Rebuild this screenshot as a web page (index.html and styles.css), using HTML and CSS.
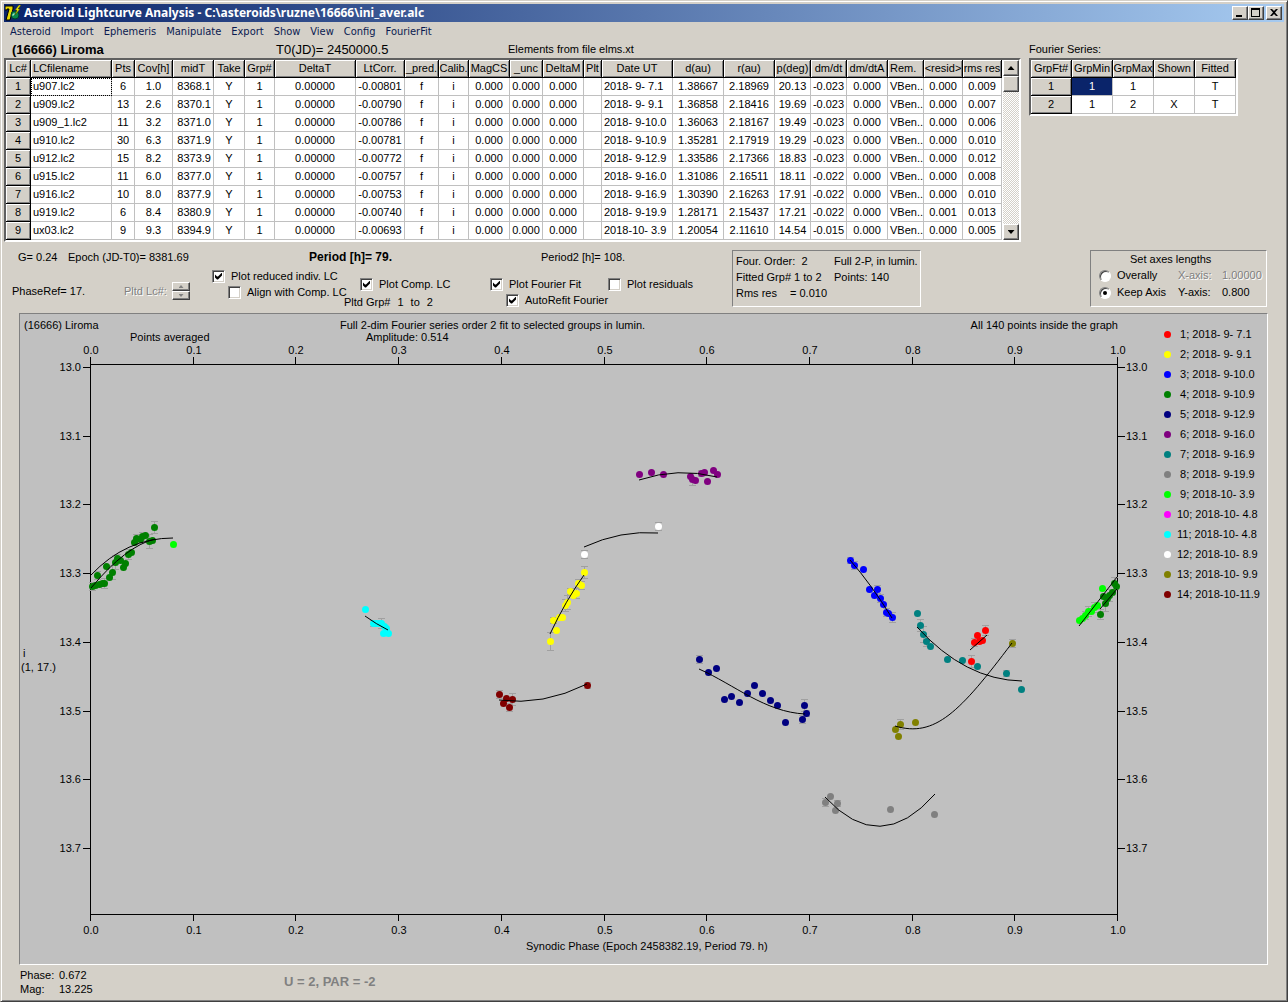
FILE: index.html
```html
<!DOCTYPE html>
<html lang="en">
<head>
    <meta charset="UTF-8">
    <meta name="viewport" content="width=device-width, initial-scale=1.0">
    <title>Asteroid Lightcurve Analysis</title>
    <link rel="stylesheet" href="styles.css">
</head>
<body>
    <div class="window">
        <header class="titlebar">
            <svg class="app-icon" viewBox="0 0 16 16" aria-hidden="true">
                <path d="M0 1h8v3L5 15H1L4 4H2v1H0z" fill="#e8d800" stroke="#000"/>
                <circle cx="10" cy="10" r="4" fill="#0a8a4a" stroke="#003c30"/>
                <path d="M7 10l2-2 1 1-2 2z" fill="#9fe8c8"/>
                <path d="M14 0l-4 5h2l-2 5 5-6h-2l3-4z" fill="#f4f000" stroke="#404000" stroke-width=".5"/>
            </svg>
            <h1>Asteroid Lightcurve Analysis - C:\asteroids\ruzne\16666\ini_aver.alc</h1>
            <div class="window-buttons">
                <button type="button" aria-label="Minimize">
                    <svg viewBox="0 0 12 10"><path d="M2 7h6v2H2z"/></svg>
                </button>
                <button type="button" aria-label="Maximize">
                    <svg viewBox="0 0 12 10"><path fill-rule="evenodd" d="M1 0h9v9H1zM2 2v6h7V2z"/></svg>
                </button>
                <button type="button" class="close" aria-label="Close">
                    <svg viewBox="0 0 12 10"><path d="M2 1h2l2 2 2-2h2L7 4.500l3 3.500H8L6 6 4 8H2l3-3.500z"/></svg>
                </button>
            </div>
        </header>

        <nav class="menu">
            <a href="#">Asteroid</a>
            <a href="#">Import</a>
            <a href="#">Ephemeris</a>
            <a href="#">Manipulate</a>
            <a href="#">Export</a>
            <a href="#">Show</a>
            <a href="#">View</a>
            <a href="#">Config</a>
            <a href="#">FourierFit</a>
        </nav>

        <main>
            <div class="grids">
                <section>
                    <div class="object-info">
                        <h2>(16666) Liroma</h2>
                        <span class="epoch">T0(JD)= 2450000.5</span>
                        <span>Elements from file elms.xt</span>
                    </div>
                    <div class="grid-box">
                        <table class="grid" id="lcTable">
                            <colgroup></colgroup>
                            <thead><tr></tr></thead>
                            <tbody></tbody>
                        </table>
                        <div class="scrollbar">
                            <button type="button" aria-label="Scroll up"><i class="arrow up"></i></button>
                            <div class="thumb"></div>
                            <button type="button" class="scroll-down" aria-label="Scroll down"><i class="arrow down"></i></button>
                        </div>
                    </div>
                </section>

                <section>
                    <div class="object-info fourier-title">Fourier Series:</div>
                    <div class="grid-box">
                        <table class="grid fourier">
                            <thead>
                                <tr><th>GrpFt#</th><th>GrpMin</th><th>GrpMax</th><th>Shown</th><th>Fitted</th></tr>
                            </thead>
                            <tbody>
                                <tr><th>1</th><td class="selected">1</td><td>1</td><td></td><td>T</td></tr>
                                <tr><th>2</th><td>1</td><td>2</td><td>X</td><td>T</td></tr>
                            </tbody>
                        </table>
                    </div>
                </section>
            </div>

            <div class="controls">
                <div class="setup">
                    <div class="setup-top">
                        <span>G= 0.24</span>
                        <span>Epoch (JD-T0)= 8381.69</span>
                        <strong>Period [h]= 79.</strong>
                        <span>Period2 [h]= 108.</span>
                    </div>
                    <div class="setup-bottom">
                        <div class="phase-ref">
                            <span>PhaseRef= 17.</span>
                            <span class="disabled">Pltd Lc#:</span>
                            <span class="spinner">
                                <button type="button" disabled aria-label="Next lightcurve"><i class="arrow up"></i></button>
                                <button type="button" disabled aria-label="Previous lightcurve"><i class="arrow down"></i></button>
                            </span>
                        </div>
                        <div class="checks plot-lc">
                            <label><input type="checkbox" checked>Plot reduced indiv. LC</label>
                            <label class="sub"><input type="checkbox">Align with Comp. LC</label>
                        </div>
                        <div class="checks comp-lc">
                            <label class="sub"><input type="checkbox" checked>Plot Comp. LC</label>
                            <div class="plotted-group"><span>Pltd Grp#</span><span>1</span><span>to</span><span>2</span></div>
                        </div>
                        <div class="checks fit">
                            <label><input type="checkbox" checked>Plot Fourier Fit</label>
                            <label class="sub"><input type="checkbox" checked>AutoRefit Fourier</label>
                        </div>
                        <div class="checks residuals">
                            <label><input type="checkbox">Plot residuals</label>
                        </div>
                    </div>
                </div>

                <div class="panel fit-info">
                    <span>Four. Order:&nbsp; 2</span><span>Full 2-P, in lumin.</span>
                    <span>Fitted Grp# 1 to 2</span><span>Points: 140</span>
                    <span class="rms"><span>Rms res</span><span>= 0.010</span></span>
                </div>

                <div class="panel axes">
                    <div class="axes-title">Set axes lengths</div>
                    <label><input type="radio" name="axes">Overally</label>
                    <span class="disabled">X-axis:</span><span class="disabled">1.00000</span>
                    <label><input type="radio" name="axes" checked>Keep Axis</label>
                    <span>Y-axis:</span><span>0.800</span>
                </div>
            </div>

            <div class="chart">
                <svg id="plot" viewBox="20 314 1130 650" role="img" aria-label="Lightcurve plot">
                    <text x="24" y="329">(16666) Liroma</text>
                    <text x="340" y="329">Full 2-dim Fourier series order 2 fit to selected groups in lumin.</text>
                    <text x="1118" y="329" text-anchor="end">All 140 points inside the graph</text>
                    <text x="130" y="341">Points averaged</text>
                    <text x="366" y="341">Amplitude: 0.514</text>
                    <text x="23" y="657">i</text>
                    <text x="21" y="671">(1, 17.)</text>
                    <text x="526" y="950">Synodic Phase (Epoch 2458382.19, Period 79. h)</text>
                    <g id="axes"></g>
                    <g id="bars"></g>
                    <g id="points"></g>
                    <g id="curves"></g>
                </svg>
                <ul class="legend" id="legend"></ul>
            </div>
        </main>

        <footer class="status">
            <dl>
                <dt>Phase:</dt><dd>0.672</dd>
                <dt>Mag:</dt><dd>13.225</dd>
            </dl>
            <strong>U = 2, PAR = -2</strong>
        </footer>
    </div>

    <script src="script.js"></script>
</body>
</html>
```

FILE: styles.css
```css
* {
    box-sizing: border-box;
}
body {
    margin: 0;
    background-color: #d4d0c8;
    color: #000;
    font: 11px/14px "Liberation Sans", Arial, sans-serif;
}
h1, h2, dl, dd, ul {
    margin: 0;
    padding: 0;
}
button {
    display: flex;
    align-items: center;
    justify-content: center;
    padding: 0;
    border: 1px solid;
    border-color: #fff #404040 #404040 #fff;
    background-color: #d4d0c8;
    box-shadow: inset -1px -1px #808080;
}

/* Window frame */
.window {
    display: flex;
    flex-direction: column;
    min-height: 100vh;
    padding: 3px 3px 1px 2px;
    border: 1px solid;
    border-color: #d4d0c8 #404040 #404040 #d4d0c8;
    box-shadow: inset 1px 1px #fff, inset -1px -1px #808080;
}
.titlebar {
    display: flex;
    align-items: center;
    height: 18px;
    margin-left: 1px;
    padding: 0 2px 0 1px;
    background: linear-gradient(to right, #0a246a, #a6caf0);
    color: #fff;
}
.app-icon {
    width: 16px;
    height: 16px;
    margin-right: 3px;
}
h1 {
    font: bold 12px/18px "Noto Sans", "DejaVu Sans", sans-serif;
}
.window-buttons {
    display: flex;
    margin-left: auto;
}
.window-buttons button {
    width: 16px;
    height: 14px;
}
.window-buttons .close {
    margin-left: 2px;
}
.window-buttons svg {
    width: 12px;
    height: 10px;
}
.menu {
    display: flex;
    gap: 10px;
    height: 20px;
    padding-left: 7px;
    font: 11px/20px "DejaVu Sans Condensed", "DejaVu Sans", sans-serif;
}
.menu a {
    color: #0a1a50;
    text-decoration: none;
}

/* Data grids */
.grids {
    display: flex;
    align-items: flex-start;
    gap: 8px;
    padding-left: 1px;
}
.object-info {
    display: grid;
    grid-template-columns: 264px 232px 1fr;
    height: 16px;
    padding-left: 8px;
}
.object-info h2, .object-info .epoch {
    font-size: 13px;
    line-height: 16px;
}
.fourier-title {
    display: block;
    padding-left: 0;
}
.grid-box {
    display: flex;
    width: max-content;
    border: 2px solid;
    border-color: #606060 #fff #fff #606060;
    background-color: #fff;
}
.grid {
    table-layout: fixed;
    width: 996px;
    border-collapse: separate;
    border-spacing: 0;
}
.grid.fourier {
    width: 205px;
}
.grid th, .grid td {
    height: 18px;
    padding: 0;
    overflow: hidden;
    border: 0 solid #c0c0c0;
    border-width: 0 1px 1px 0;
    line-height: 17px;
    text-align: center;
    white-space: pre;
}
.grid th {
    border-color: #000;
    background-color: #d4d0c8;
    box-shadow: inset 1px 1px #fff, inset -1px -1px #808080;
    font-weight: normal;
}
.grid .left {
    padding-left: 2px;
    text-align: left;
}
.grid .right {
    padding-right: 2px;
    text-align: right;
}
.grid .focused {
    outline: 1px dotted #000;
    outline-offset: -1px;
}
.grid .selected {
    background-color: #0a246a;
    color: #fff;
}
.scrollbar {
    display: flex;
    flex-direction: column;
    width: 16px;
    margin-left: 1px;
    background: repeating-conic-gradient(#fff 0 25%, #d4d0c8 0 50%) 0 0 / 2px 2px;
}
.scrollbar button, .thumb {
    height: 16px;
}
.scroll-down {
    margin-top: auto;
}
.thumb {
    border: 1px solid;
    border-color: #fff #404040 #404040 #fff;
    background-color: #d4d0c8;
    box-shadow: inset -1px -1px #808080;
}
.arrow {
    width: 7px;
    height: 4px;
    background-color: #000;
}
.arrow.up {
    clip-path: polygon(50% 0, 100% 100%, 0 100%);
}
.arrow.down {
    clip-path: polygon(0 0, 100% 0, 50% 100%);
}

/* Controls */
.controls {
    display: flex;
    align-items: flex-start;
    padding: 8px 17px 4px 9px;
}
.setup {
    flex: none;
    width: 720px;
}
.setup-top {
    display: grid;
    grid-template-columns: 50px 241px 232px 1fr;
    padding-left: 6px;
}
.setup-top strong {
    font-size: 12px;
}
.setup-bottom {
    display: flex;
    align-items: flex-start;
}
.phase-ref {
    display: grid;
    grid-template-columns: 112px 48px 18px;
    align-items: center;
    width: 200px;
    padding-top: 18px;
}
.disabled {
    color: #808080;
    text-shadow: 1px 1px #fff;
}
.spinner button {
    width: 18px;
    height: 9px;
}
.spinner .arrow {
    width: 5px;
    height: 3px;
    background-color: #808080;
}
.checks label {
    display: flex;
    align-items: center;
    gap: 6px;
    height: 16px;
    white-space: nowrap;
}
.checks .sub {
    padding-left: 16px;
}
.plot-lc {
    width: 132px;
    padding-top: 4px;
}
.comp-lc {
    width: 146px;
    padding-top: 12px;
}
.fit {
    width: 118px;
    padding-top: 12px;
}
.residuals {
    padding-top: 12px;
}
.plotted-group {
    display: flex;
    gap: 7px;
    padding-top: 3px;
}
input {
    flex: none;
    margin: 0;
    appearance: none;
    background-color: #fff;
}
input[type="checkbox"] {
    width: 13px;
    height: 13px;
    padding: 2px;
    border: 1px solid;
    border-color: #808080 #fff #fff #808080;
    box-shadow: inset 1px 1px #404040, inset -1px -1px #d4d0c8;
}
input[type="checkbox"]:checked::before {
    content: "";
    display: block;
    width: 7px;
    height: 7px;
    background-color: #000;
    clip-path: polygon(0 2px, 2px 4px, 3px 4px, 7px 0, 7px 3px, 3px 7px, 2px 7px, 0 5px);
}
input[type="radio"] {
    width: 12px;
    height: 12px;
    padding: 3px;
    border: 1px solid;
    border-color: #808080 #fff #fff #808080;
    border-radius: 50%;
    box-shadow: inset 1px 1px #404040;
}
input[type="radio"]:checked::before {
    content: "";
    display: block;
    width: 4px;
    height: 4px;
    border-radius: 50%;
    background-color: #000;
}
.panel {
    height: 57px;
    border: 1px solid;
    border-color: #808080 #fff #fff #808080;
}
.fit-info {
    display: grid;
    grid-template-columns: 98px 1fr;
    align-content: start;
    width: 189px;
    padding: 2px 3px;
    line-height: 16px;
    white-space: nowrap;
}
.rms {
    display: grid;
    grid-template-columns: 54px 1fr;
}
.axes {
    display: grid;
    grid-template-columns: 79px 44px 1fr;
    align-content: start;
    width: 177px;
    margin-left: auto;
    padding-left: 8px;
    line-height: 17px;
}
.axes-title {
    grid-column: 1 / -1;
    padding-left: 31px;
    line-height: 16px;
}
.axes label {
    display: flex;
    align-items: center;
    gap: 6px;
}

/* Chart */
.chart {
    display: flex;
    align-items: flex-start;
    margin: 0 16px;
    border: 1px solid;
    border-color: #808080 #fff #fff #808080;
    background-color: #c0c0c0;
}
.chart svg {
    flex: 1;
    min-width: 0;
    font-size: 11px;
}
#axes path, #bars {
    shape-rendering: crispEdges;
}
#axes path, #curves path {
    fill: none;
    stroke: #000;
}
#bars path {
    stroke: #a0a0a0;
}
.legend {
    width: 117px;
    padding: 10px 0 0 14px;
    list-style: none;
}
.legend li {
    display: flex;
    align-items: center;
    gap: 6px;
    height: 20px;
    white-space: pre;
}
.legend i {
    width: 7px;
    height: 7px;
    border-radius: 50%;
}

.status {
    display: flex;
    align-items: center;
    padding: 3px 17px;
}
.status dl {
    display: grid;
    grid-template-columns: 39px 225px;
}
.status strong {
    color: #808080;
    font-size: 13px;
}
```

FILE: script.js
```js
// Lightcurve table: title, column width, cell alignment
const columns = [
    ['Lc#', 25], ['LCfilename', 81, 'left'], ['Pts', 23], ['Cov[h]', 38], ['midT', 41, 'right'],
    ['Take', 31], ['Grp#', 30], ['DeltaT', 81], ['LtCorr.', 49], ['_pred.', 34], ['Calib.', 30],
    ['MagCS', 41], ['_unc', 33], ['DeltaM', 41], ['Plt', 18], ['Date UT', 71, 'left'],
    ['d(au)', 51], ['r(au)', 51], ['p(deg)', 36], ['dm/dt', 36], ['dm/dtA', 41],
    ['Rem.', 36, 'left'], ['<resid>', 39], ['rms res', 39]
];

// file, points, coverage, midT, light time, date, delta, r, phase angle, dm/dt, resid, rms
const curvesData = [
    ['u907.lc2', '6', '1.0', '8368.1', '-0.00801', '2018- 9- 7.1', '1.38667', '2.18969', '20.13', '-0.023', '0.000', '0.009'],
    ['u909.lc2', '13', '2.6', '8370.1', '-0.00790', '2018- 9- 9.1', '1.36858', '2.18416', '19.69', '-0.023', '0.000', '0.007'],
    ['u909_1.lc2', '11', '3.2', '8371.0', '-0.00786', '2018- 9-10.0', '1.36063', '2.18167', '19.49', '-0.023', '0.000', '0.006'],
    ['u910.lc2', '30', '6.3', '8371.9', '-0.00781', '2018- 9-10.9', '1.35281', '2.17919', '19.29', '-0.023', '0.000', '0.010'],
    ['u912.lc2', '15', '8.2', '8373.9', '-0.00772', '2018- 9-12.9', '1.33586', '2.17366', '18.83', '-0.023', '0.000', '0.012'],
    ['u915.lc2', '11', '6.0', '8377.0', '-0.00757', '2018- 9-16.0', '1.31086', '2.16511', '18.11', '-0.022', '0.000', '0.008'],
    ['u916.lc2', '10', '8.0', '8377.9', '-0.00753', '2018- 9-16.9', '1.30390', '2.16263', '17.91', '-0.022', '0.000', '0.010'],
    ['u919.lc2', '6', '8.4', '8380.9', '-0.00740', '2018- 9-19.9', '1.28171', '2.15437', '17.21', '-0.022', '0.001', '0.013'],
    ['ux03.lc2', '9', '9.3', '8394.9', '-0.00693', '2018-10- 3.9', '1.20054', '2.11610', '14.54', '-0.015', '0.000', '0.005']
];

// Plotted series; each point is x, y and, where drawn, half height of its error bar
const series = [
    { date: '2018- 9- 7.1', color: '#ff0000', points: [[985,630,5],[977,635],[974,642,4],[979,641],[982,640],[971,661,6]], curves: ['M970 650L987 635'] },
    { date: '2018- 9- 9.1', color: '#ffff00', points: [[584,572,6],[578,583,4],[581,585,4],[570,591,3],[573,595],[576,593,5],[567,602,7],[565,605,6],[559,617],[553,620,3],[562,617],[556,630],[550,641,9]], curves: ['M550 634Q566 600 584 575'] },
    { date: '2018- 9-10.0', color: '#0000ff', points: [[850,560,3],[854,565,4],[863,569],[869,589],[877,589,4],[874,595],[880,598,4],[883,604],[886,612,4],[888,613],[892,617,5]], curves: ['M850 560Q871 584 892 618'] },
    { date: '2018- 9-10.9', color: '#008000', points: [[92,586,4],[95,585],[97,575,4],[99,584],[102,583],[104,583,5],[106,566],[109,577],[112,572,7],[115,562,7],[117,558,4],[120,560],[123,567],[125,563],[128,554,5],[131,552],[134,542],[136,538,4],[140,539],[142,536,4],[145,535],[149,541,7],[152,540],[154,527,6],[1100,614,5],[1105,603,8],[1103,596],[1107,598],[1109,595,6],[1112,592],[1114,583,6],[1116,586]], curves: ['M91 588Q126 546 155 539', 'M1100 609L1117 589'] },
    { date: '2018- 9-12.9', color: '#000080', points: [[699,659,4],[708,672],[716,668],[724,699],[731,696],[739,702],[747,693],[754,685],[762,693],[770,700],[777,705],[785,722],[804,705,6],[806,713,3],[802,719,4]], curves: ['M699 669C735 685 765 712 805 714'] },
    { date: '2018- 9-16.0', color: '#800080', points: [[639,474],[651,472],[663,474],[690,476],[692,479,6],[695,480],[701,473,3],[704,472],[713,470],[717,474],[707,481]], curves: ['M639 480Q678 467 717 477'] },
    { date: '2018- 9-16.9', color: '#008080', points: [[917,613],[920,625,6],[923,634,8],[926,641,5],[930,646],[947,659],[962,660],[977,666],[1006,673,3],[1021,689]], curves: ['M917 627Q965 680 1022 681'] },
    { date: '2018- 9-19.9', color: '#808080', points: [[825,802,4],[830,796],[837,803,3],[835,810],[890,809],[934,814]], curves: ['M825 797Q880 857 935 794'] },
    { date: '2018-10- 3.9', color: '#00ff00', points: [[173,544],[1102,588],[1079,620],[1082,618],[1085,615,4],[1088,611,5],[1091,611],[1094,607,5],[1097,605]], curves: ['M91 575Q126 538 173 538', 'M1079 626L1117 577'] },
    { date: '2018-10- 4.8', color: '#ff00ff', points: [], curves: [] },
    { date: '2018-10- 4.8', color: '#00ffff', points: [[365,609],[373,623,3],[376,623],[379,623],[381,623,5],[384,626],[386,628],[383,633],[388,633]], curves: ['M365 616Q376 624 388 630'] },
    { date: '2018-10- 8.9', color: '#ffffff', points: [[658,526,4],[584,554,4]], curves: ['M584 547Q621 530 658 533'] },
    { date: '2018-10- 9.9', color: '#808000', points: [[1012,643,4],[915,722],[900,724,5],[895,729],[898,736]], curves: ['M895 726C935 738 960 712 1012 643'] },
    { date: '2018-10-11.9', color: '#800000', points: [[499,694,4],[506,698],[512,699,6],[503,703],[509,707,4],[587,685,3]], curves: ['M499 700Q543 706 587 684'] }
];

function fillTable() {
    const table = document.getElementById('lcTable');
    table.querySelector('colgroup').innerHTML = columns.map(c => `<col style="width: ${c[1]}px">`).join('');
    table.querySelector('thead tr').innerHTML = columns.map(c => {
        const left = c[0] === 'LCfilename' || c[0] === 'Rem.' ? ' class="left"' : '';
        return `<th${left}>${c[0].replace('<', '&lt;')}</th>`;
    }).join('');
    table.querySelector('tbody').innerHTML = curvesData.map((d, row) => {
        const cells = [d[0], d[1], d[2], d[3], 'Y', '1', '0.00000', d[4], 'f', 'i', '0.000', '0.000', '0.000', '',
            d[5], d[6], d[7], d[8], d[9], '0.000', 'VBen..', d[10], d[11]];
        return `<tr><th>${row + 1}</th>` + cells.map((text, i) => {
            const focused = row === 0 && i === 0 ? ' focused' : '';
            return `<td class="${columns[i + 1][2] || ''}${focused}">${text}</td>`;
        }).join('') + '</tr>';
    }).join('');
}

function drawAxes() {
    let html = '<path d="M90.5 357V921M1117.5 357V921M90 364.5H1118M90 914.5H1118"/>';
    for (let i = 0; i <= 10; i++) {
        const x = Math.round(90 + i * 102.7);
        const label = (i / 10).toFixed(1);
        html += `<path d="M${x + 0.5} 357V364M${x + 0.5} 915V921"/>`;
        html += `<text x="${x + 1}" y="354" text-anchor="middle">${label}</text>`;
        html += `<text x="${x + 1}" y="934" text-anchor="middle">${label}</text>`;
    }
    for (let i = 0; i <= 7; i++) {
        const y = Math.round(367 + i * 68.7);
        const label = (13 + i / 10).toFixed(1);
        html += `<path d="M83 ${y + 0.5}H90M1118 ${y + 0.5}H1125"/>`;
        html += `<text x="81" y="${y + 4}" text-anchor="end">${label}</text>`;
        html += `<text x="1126" y="${y + 4}">${label}</text>`;
    }
    document.getElementById('axes').innerHTML = html;
}

function drawSeries() {
    let bars = '', points = '', curves = '', legend = '';
    series.forEach((s, i) => {
        s.points.forEach(([x, y, e]) => {
            if (e) {
                bars += `<path d="M${x + 0.5} ${y - e}v${2 * e + 1}M${x - 3} ${y - e + 0.5}h7M${x - 3} ${y + e + 0.5}h7"/>`;
            }
            points += `<circle cx="${x + 0.5}" cy="${y + 0.5}" r="3.5" fill="${s.color}"/>`;
        });
        s.curves.forEach(d => {
            curves += `<path d="${d}"/>`;
        });
        legend += `<li><i style="background-color: ${s.color}"></i>${String(i + 1).padStart(2)}; ${s.date}</li>`;
    });
    document.getElementById('bars').innerHTML = bars;
    document.getElementById('points').innerHTML = points;
    document.getElementById('curves').innerHTML = curves;
    document.getElementById('legend').innerHTML = legend;
}

fillTable();
drawAxes();
drawSeries();
```
